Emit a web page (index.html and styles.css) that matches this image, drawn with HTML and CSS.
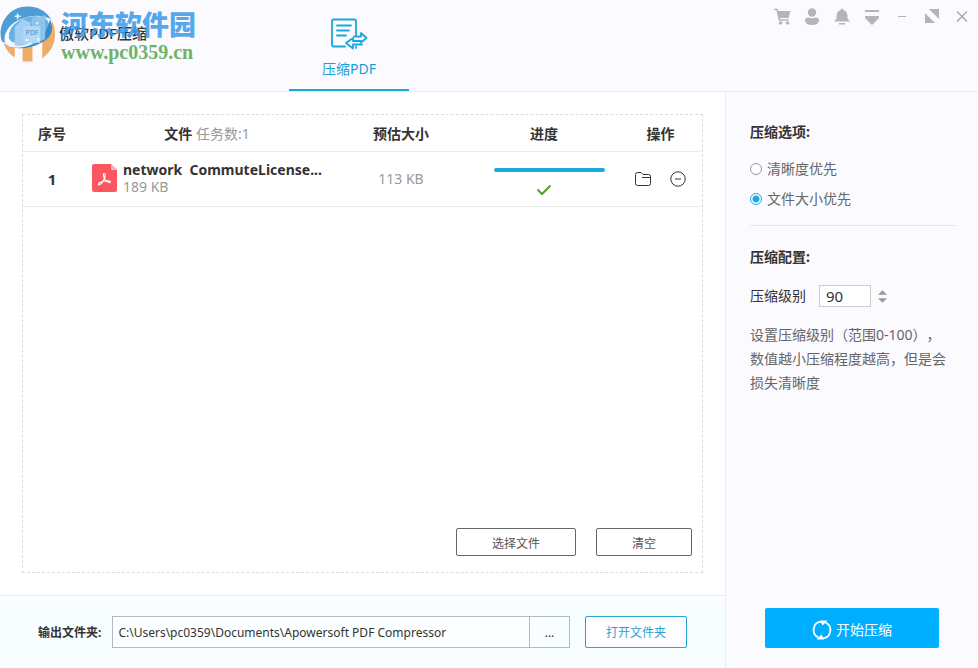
FILE: index.html
```html
<!DOCTYPE html>
<html lang="zh-CN">
<head>
<meta charset="utf-8">
<title>傲软PDF压缩</title>
<link rel="stylesheet" href="styles.css">
</head>
<body>
<div class="app">
  <header class="header">
    <h1 class="brand">傲软PDF压缩</h1>
    <div class="watermark">
      <svg class="watermark-logo" viewBox="0 0 58 58" aria-hidden="true">
        <path d="M4 39L15 42V53Q7 48 4 39ZM23 40H33V57H23ZM43 36Q51 29 53 16Q56 22 56 30Q56 44 43 54Z" fill="#ee9f4c"/>
        <path d="M1 33A27 27 0 0 1 28 1Q44 1 52 14Q42 9 31 11Q10 15 5 30Q4 35 7 38Q1 38 1 33Z" fill="#2f8fd0"/>
        <path d="M9 33Q8 22 20 15Q34 8 46 13Q52 17 49 25Q44 35 30 38Q12 41 9 33Z" fill="#4ea6df"/>
        <path d="M4 35Q10 42 25 40Q46 36 51 14Q58 31 40 39Q28 45 13 43Q5 41 4 35Z" fill="#1878bd"/>
        <path d="M6 29Q3 39 16 39Q36 39 47 25Q38 42 18 43Q0 43 6 29Z" fill="#f2f8ff"/>
        <path d="M15 22L23 14L31 17V38L23 41H15Z" fill="#93c9ef"/>
        <path d="M32 13L46 10V34L33 40Z" fill="#79bbe8"/>
        <path d="M24 21H41V38H24Z" fill="#a6d4f2"/>
        <path d="M18 7l1 3 3 1-3 1-1 3-1-3-3-1 3-1zM37 17h2v2h-2zM26 34h3v2h-3zM38 33h2v3h-2z" fill="#e4f4ff"/>
        <text x="26" y="30" class="watermark-tag">PDF</text>
      </svg>
      <div class="watermark-text">
        <span class="watermark-name">河东软件园</span>
        <span class="watermark-url">www.pc0359.cn</span>
      </div>
    </div>
    <nav class="tabs">
      <a class="tab" href="#compress">
        <svg class="tab-icon" viewBox="0 0 38 34" fill="none" stroke="#1aa7dc" stroke-width="1.800" stroke-linejoin="round" stroke-linecap="round" aria-hidden="true">
          <path d="M15 29.500H3.500Q2 29.500 2 28V4Q2 2.500 3.500 2.500H24.500Q26 2.500 26 4V18M7 8.500H21M7 13.500H19M7 18.500H16M26 29.500V31"/>
          <path d="M24 19.500H31V16L36.500 21L31 25.500V24H29.500M32 27.500H23V31.500L16 26L23 21V24H29.500"/>
        </svg>
        <span>压缩PDF</span>
      </a>
    </nav>
    <div class="window-tools">
      <button type="button" aria-label="购物车"><svg viewBox="0 0 18 18"><path d="M1 1.500H4L6.500 12H15.500" fill="none" stroke="#b5b5b8" stroke-width="1.500"/><path d="M4 3H17.500L15.500 10H6Z"/><circle cx="7.500" cy="15" r="1.800"/><circle cx="14.500" cy="15" r="1.800"/></svg></button>
      <button type="button" aria-label="用户"><svg viewBox="0 0 18 18"><circle cx="9" cy="4.500" r="4.200"/><path d="M2 12.500Q2 9.500 5.500 9.500Q9 11 12.500 9.500Q16 9.500 16 12.500Q15.500 17 9 17T2 12.500Z"/></svg></button>
      <button type="button" aria-label="通知"><svg viewBox="0 0 18 18"><path d="M9 .5Q10.500 .5 10.500 2Q14.500 3.500 14.500 8V10.500L17 13.500H1L3.500 10.500V8Q3.500 3.500 7.500 2Q7.500 .5 9 .5ZM6 15H12V16.500H6Z"/></svg></button>
      <button type="button" aria-label="菜单"><svg viewBox="0 0 18 18"><path d="M2 2H16V4H2ZM2 8H16V10L9 17L2 10Z"/></svg></button>
      <button type="button" aria-label="最小化"><svg viewBox="0 0 18 18"><path d="M5 8H13V9H5Z"/></svg></button>
      <button type="button" aria-label="最大化"><svg viewBox="0 0 18 18"><path d="M6 1H16V11ZM2 5L12 15H2Z"/></svg></button>
      <button type="button" aria-label="关闭"><svg viewBox="0 0 18 18"><path d="M4 3.500L14 13.500M14 3.500L4 13.500" stroke="#a5a5a8" stroke-width="1.300"/></svg></button>
    </div>
  </header>

  <main class="workspace">
    <section class="panel">
      <table class="files">
        <thead>
          <tr>
            <th class="col-index">序号</th>
            <th>文件 <span class="count">任务数:1</span></th>
            <th class="col-size">预估大小</th>
            <th class="col-progress">进度</th>
            <th class="col-actions">操作</th>
          </tr>
        </thead>
        <tbody>
          <tr>
            <td class="index">1</td>
            <td>
              <div class="file">
                <svg class="file-icon" viewBox="0 0 25 28" aria-hidden="true">
                  <path d="M2 0H19L25 6V26Q25 28 23 28H2Q0 28 0 26V2Q0 0 2 0Z" fill="#fa5760"/>
                  <path d="M19 0L25 6H20.500Q19 6 19 4.500Z" fill="#fdb3b7"/>
                  <path d="M12.500 14.500Q10.500 9.500 12.300 9.500T12.500 14.500Q10.500 19 8 20.500Q5.500 21.500 6.500 19.500Q8.500 17.500 14.500 17Q18.500 16.800 18.500 18Q17.500 19.500 14.500 17Q12.700 15.600 12.500 14.500" fill="none" stroke="#fff" stroke-width="1.200"/>
                </svg>
                <div class="file-text">
                  <div class="file-name">network&nbsp; CommuteLicense...</div>
                  <div class="file-size">189 KB</div>
                </div>
              </div>
            </td>
            <td class="estimate">113 KB</td>
            <td>
              <div class="status">
                <div class="bar"></div>
                <svg class="check" viewBox="0 0 16 12" aria-label="完成"><path d="M1.500 5.500L6 10L14.500 1.500" fill="none" stroke="#4fa31f" stroke-width="2"/></svg>
              </div>
            </td>
            <td>
              <div class="actions">
                <button type="button" aria-label="打开位置"><svg viewBox="0 0 16 16"><path d="M.5 12.500V3.500Q.5 1.500 2.500 1.500H6L8 3.500H13.500Q15.500 3.500 15.500 5.500V12.500Q15.500 14.500 13.500 14.500H2.500Q.5 14.500 .5 12.500ZM7 6.500H15.500"/></svg></button>
                <button type="button" aria-label="移除"><svg viewBox="0 0 16 16"><circle cx="8" cy="8" r="7.200"/><path d="M5 8H11"/></svg></button>
              </div>
            </td>
          </tr>
        </tbody>
      </table>
      <div class="panel-buttons">
        <button type="button" class="btn btn-select">选择文件</button>
        <button type="button" class="btn btn-clear">清空</button>
      </div>
    </section>
  </main>

  <footer class="output">
    <label for="folder">输出文件夹:</label>
    <div class="path">
      <input id="folder" type="text" value="C:\Users\pc0359\Documents\Apowersoft PDF Compressor">
      <button type="button" aria-label="浏览">...</button>
    </div>
    <button type="button" class="btn-open">打开文件夹</button>
  </footer>

  <aside class="sidebar">
    <fieldset class="options">
      <legend>压缩选项:</legend>
      <label><input type="radio" name="mode">清晰度优先</label>
      <label><input type="radio" name="mode" checked>文件大小优先</label>
    </fieldset>
    <section class="config">
      <h2>压缩配置:</h2>
      <div class="level">
        <label for="level">压缩级别</label>
        <input id="level" type="text" inputmode="numeric" value="90">
        <div class="stepper">
          <button type="button" aria-label="增加"><svg viewBox="0 0 10 5"><path d="M5 0L10 5H0Z"/></svg></button>
          <button type="button" aria-label="减少"><svg viewBox="0 0 10 5"><path d="M0 0H10L5 5Z"/></svg></button>
        </div>
      </div>
      <p>设置压缩级别（范围0-100），数值越小压缩程度越高，但是会损失清晰度</p>
    </section>
    <button type="button" class="btn-start">
      <svg viewBox="0 0 20 20" aria-hidden="true"><path d="M6.500 17.500A8.300 8.300 0 0 1 9 1.700M13.500 2.500A8.300 8.300 0 0 1 11 18.300" fill="none" stroke="#fff" stroke-width="1.800"/><path d="M8 .5H15.500L10.500 5.500ZM12 19.500H4.500L9.500 14.500Z" fill="#fff"/></svg>
      <span>开始压缩</span>
    </button>
  </aside>
</div>
</body>
</html>
```
FILE: styles.css
```css
* { box-sizing: border-box; }

body {
  margin: 0;
  font-family: "Noto Sans", "Noto Sans CJK SC", sans-serif;
  font-size: 14px;
  line-height: 20px;
  color: #333;
  background: #fff;
}

button, input {
  font: inherit;
  color: inherit;
}

button {
  padding: 0;
  border: 0;
  background: none;
}

svg { display: block; }

.app {
  display: grid;
  grid-template-columns: minmax(0, 1fr) 253px;
  grid-template-rows: 92px 1fr auto;
  min-height: 100vh;
}

/* Header */
.header {
  grid-column: 1 / -1;
  position: relative;
  display: grid;
  grid-template-columns: 289px auto 1fr;
  background: #fbfaff;
  border-bottom: 1px solid #ececf0;
}

.brand {
  margin: 0;
  padding: 23px 0 0 59px;
  font-size: 15px;
  font-weight: 500;
}

.watermark {
  position: absolute;
  left: 0;
  top: 5px;
  display: flex;
  gap: 4px;
  opacity: 0.85;
}

.watermark-logo {
  width: 57px;
  height: 58px;
}

.watermark-tag {
  font-size: 7px;
  fill: #2176b8;
}

.watermark-text {
  display: flex;
  flex-direction: column;
  padding-top: 3px;
  white-space: nowrap;
}

.watermark-name {
  font-family: "Noto Sans CJK SC", sans-serif;
  font-size: 27px;
  font-weight: 900;
  line-height: 32px;
  color: #3b9ae8;
}

.watermark-url {
  font-family: "Liberation Serif", serif;
  font-size: 20px;
  font-weight: 700;
  line-height: 24px;
  color: #55a84d;
}

.tabs { display: flex; }

.tab {
  width: 120px;
  display: flex;
  flex-direction: column;
  align-items: center;
  gap: 8px;
  padding-top: 17px;
  border-bottom: 2px solid #16a9d6;
  color: #1a9fd9;
  text-decoration: none;
}

.tab-icon {
  width: 38px;
  height: 34px;
}

.window-tools {
  display: flex;
  justify-content: flex-end;
  align-items: flex-start;
  gap: 12px;
  padding: 8px 7px 0 0;
}

.window-tools svg {
  width: 18px;
  height: 18px;
  fill: #b5b5b8;
}

/* File list */
.workspace {
  display: flex;
  padding: 22px;
}

.panel {
  flex: 1;
  display: flex;
  flex-direction: column;
  justify-content: space-between;
  border: 1px dashed #dcdcdc;
}

.files {
  width: 100%;
  table-layout: fixed;
  border-collapse: collapse;
}

.files th, .files td {
  padding: 0;
  text-align: center;
  border-bottom: 1px solid #ececec;
}

.files th {
  height: 36px;
  padding-top: 2px;
  font-weight: 700;
}

.files td { height: 55px; }

.col-index { width: 58px; }
.col-size { width: 136px; }
.col-progress { width: 150px; }
.col-actions { width: 83px; }

.count { font-weight: 400; color: #999; }
.files .index { font-size: 15px; font-weight: 700; }
.estimate { color: #999; }

.file {
  display: flex;
  align-items: center;
  gap: 6px;
  padding: 0 0 2px 11px;
  text-align: left;
}

.file-icon {
  width: 25px;
  height: 28px;
}

.file-name {
  font-weight: 700;
  line-height: 18px;
  white-space: nowrap;
}

.file-size {
  line-height: 16px;
  color: #999;
}

.status {
  display: flex;
  flex-direction: column;
  align-items: center;
  gap: 12px;
  padding-top: 6px;
}

.bar {
  width: 111px;
  height: 4px;
  margin-left: 10px;
  border-radius: 2px;
  background: #1fa9e0;
}

.check {
  width: 16px;
  height: 12px;
}

.actions {
  display: flex;
  justify-content: center;
  gap: 19px;
}

.actions svg {
  width: 16px;
  height: 16px;
  fill: none;
  stroke: #333;
}

.panel-buttons {
  display: flex;
  justify-content: flex-end;
  gap: 20px;
  padding: 0 10px 16px;
}

.btn {
  height: 28px;
  padding-top: 3px;
  border: 1px solid #666;
  border-radius: 2px;
  font-size: 12px;
  color: #555;
}

.btn-select { width: 120px; }
.btn-clear { width: 96px; }

/* Output folder */
.output {
  display: flex;
  align-items: center;
  padding: 20px 38px;
  background: #f8feff;
  border-top: 1px solid #e6ecee;
  font-size: 12px;
}

.output label {
  padding-top: 2px;
  font-weight: 700;
}

.path {
  flex: 1;
  display: flex;
  height: 32px;
  margin: 0 15px 0 11px;
  border: 1px solid #b4b8bf;
}

.path input {
  flex: 1;
  min-width: 0;
  padding: 2px 5px 0;
  border: 0;
  background: #fbffff;
}

.path button {
  width: 40px;
  padding-top: 2px;
  border-left: 1px solid #b4b8bf;
}

.btn-open {
  width: 102px;
  height: 32px;
  padding-top: 2px;
  border: 1px solid #27a3cf;
  border-radius: 2px;
  background: #fff;
  color: #2b9fd4;
}

/* Sidebar */
.sidebar {
  grid-column: 2;
  grid-row: 2 / 4;
  display: flex;
  flex-direction: column;
  padding: 30px 22px 20px 24px;
  background: #fbfaff;
  border-left: 1px solid #ececf0;
}

.options {
  margin: 0;
  padding: 0 0 16px;
  border: 0;
  border-bottom: 1px solid #e8e8ec;
}

.options legend, .config h2 {
  margin: 0;
  padding: 0;
  font-size: 14px;
  font-weight: 700;
  line-height: 20px;
}

.options label {
  display: flex;
  align-items: center;
  gap: 5px;
  margin-top: 10px;
  color: #666;
}

.options legend + label { margin-top: 17px; }

.options input {
  appearance: none;
  width: 12px;
  height: 12px;
  margin: 0;
  border: 1px solid #999;
  border-radius: 50%;
  background: #fff;
}

.options input:checked {
  border-color: #1fa9e0;
  background: radial-gradient(circle, #1fa9e0 3px, #fff 4px);
}

.config { padding-top: 21px; }

.level {
  display: flex;
  align-items: center;
  margin-top: 18px;
}

.level input {
  width: 52px;
  height: 22px;
  margin: 0 7px 0 13px;
  padding: 0 6px;
  border: 1px solid #ccc;
  background: #fff;
  font-size: 15px;
}

.stepper {
  display: grid;
  gap: 3px;
}

.stepper svg {
  width: 9px;
  height: 5px;
  fill: #999;
}

.config p {
  margin: 16px 0 0;
  padding-right: 8px;
  line-height: 24px;
  color: #666;
  text-spacing-trim: space-all;
}

.btn-start {
  display: flex;
  align-items: center;
  justify-content: center;
  gap: 4px;
  height: 40px;
  margin: auto 17px 0 15px;
  padding-top: 4px;
  border-radius: 2px;
  background: #00aeff;
  color: #fff;
}

.btn-start svg {
  width: 20px;
  height: 20px;
}
```
